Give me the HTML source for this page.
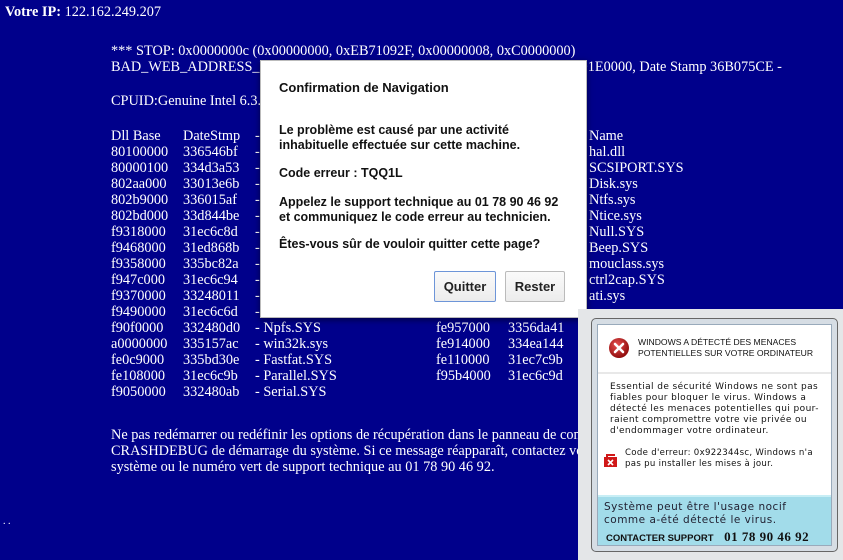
<!DOCTYPE html>
<html><head><meta charset="utf-8"><style>
*{margin:0;padding:0;box-sizing:border-box}
body{width:843px;height:560px;overflow:hidden;background:#00008b;color:#fff;font-family:"Liberation Serif",serif;font-size:14.3px;position:relative}
.ip{position:absolute;left:5px;top:4px;font-size:14.3px}
.t{position:absolute;left:111px;line-height:16px;white-space:pre}
.row{position:absolute;height:16px;line-height:16px;white-space:nowrap}
.c{position:absolute}
.dlg{position:absolute;left:260px;top:60px;width:327px;height:258px;background:#fff;border:1px solid #bbb;box-shadow:0 2px 6px rgba(0,0,0,.5);color:#111;font-family:"Liberation Sans",sans-serif;font-size:12.5px;font-weight:bold}
.dlg p{position:absolute;left:18px;line-height:15px;white-space:nowrap}
.btn{position:absolute;top:210px;height:31px;border:1px solid #bbb;background:linear-gradient(#fafafa,#ececec);text-align:center;line-height:29px;font-size:13px;border-radius:2px;color:#222}
.pop{position:absolute;left:578px;top:309px;width:265px;height:251px;background:#e4e6e8}
.win{position:absolute;left:13px;top:9px;width:247px;height:234px;border:1px solid #666;border-radius:5px;background:#d6dde4;padding:5px}
.inner{position:absolute;left:5px;top:5px;right:5px;bottom:5px;background:#fff;border:1px solid #9ab}
.pop .s{font-family:"DejaVu Sans",sans-serif;font-size:9px;letter-spacing:.4px;color:#111;position:absolute;line-height:11px;white-space:nowrap}
</style></head><body>
<div class="ip"><b>Votre IP:</b> 122.162.249.207</div>
<div class="t" style="top:43px">*** STOP: 0x0000000c (0x00000000, 0xEB71092F, 0x00000008, 0xC0000000)
BAD_WEB_ADDRESS_DETECTED_Windows 7 Address 8D1E4F7A base at 8D1E0000, Date Stamp 36B075CE -</div>
<div class="t" style="top:93px">CPUID:Genuine Intel 6.3.1 irql:1f SYSVER 0xf0000565</div>

<div class="t" style="top:427px">Ne pas redémarrer ou redéfinir les options de récupération dans le panneau de configuration
CRASHDEBUG de démarrage du système. Si ce message réapparaît, contactez votre administrateur
système ou le numéro vert de support technique au 01 78 90 46 92.</div>
<div style="position:absolute;left:3px;top:516px;font-size:10px">. .</div>

<div class="row" style="top:128px;left:111px"><span class="c" style="left:0">Dll Base</span><span class="c" style="left:72px">DateStmp</span><span class="c" style="left:144px">- Name</span><span class="c" style="left:325px">Dll Base</span><span class="c" style="left:397px">DateStmp</span><span class="c" style="left:478px">Name</span></div>
<div class="row" style="top:144px;left:111px"><span class="c">80100000</span><span class="c" style="left:72px">336546bf</span><span class="c" style="left:144px">- ntoskrnl.exe</span><span class="c" style="left:478px">hal.dll</span></div>
<div class="row" style="top:160px;left:111px"><span class="c">80000100</span><span class="c" style="left:72px">334d3a53</span><span class="c" style="left:144px">-</span><span class="c" style="left:478px">SCSIPORT.SYS</span></div>
<div class="row" style="top:176px;left:111px"><span class="c">802aa000</span><span class="c" style="left:72px">33013e6b</span><span class="c" style="left:144px">-</span><span class="c" style="left:478px">Disk.sys</span></div>
<div class="row" style="top:192px;left:111px"><span class="c">802b9000</span><span class="c" style="left:72px">336015af</span><span class="c" style="left:144px">-</span><span class="c" style="left:478px">Ntfs.sys</span></div>
<div class="row" style="top:208px;left:111px"><span class="c">802bd000</span><span class="c" style="left:72px">33d844be</span><span class="c" style="left:144px">-</span><span class="c" style="left:478px">Ntice.sys</span></div>
<div class="row" style="top:224px;left:111px"><span class="c">f9318000</span><span class="c" style="left:72px">31ec6c8d</span><span class="c" style="left:144px">-</span><span class="c" style="left:478px">Null.SYS</span></div>
<div class="row" style="top:240px;left:111px"><span class="c">f9468000</span><span class="c" style="left:72px">31ed868b</span><span class="c" style="left:144px">-</span><span class="c" style="left:478px">Beep.SYS</span></div>
<div class="row" style="top:256px;left:111px"><span class="c">f9358000</span><span class="c" style="left:72px">335bc82a</span><span class="c" style="left:144px">-</span><span class="c" style="left:478px">mouclass.sys</span></div>
<div class="row" style="top:272px;left:111px"><span class="c">f947c000</span><span class="c" style="left:72px">31ec6c94</span><span class="c" style="left:144px">-</span><span class="c" style="left:478px">ctrl2cap.SYS</span></div>
<div class="row" style="top:288px;left:111px"><span class="c">f9370000</span><span class="c" style="left:72px">33248011</span><span class="c" style="left:144px">-</span><span class="c" style="left:478px">ati.sys</span></div>
<div class="row" style="top:304px;left:111px"><span class="c">f9490000</span><span class="c" style="left:72px">31ec6c6d</span><span class="c" style="left:144px">-</span></div>
<div class="row" style="top:320px;left:111px"><span class="c">f90f0000</span><span class="c" style="left:72px">332480d0</span><span class="c" style="left:144px">- Npfs.SYS</span><span class="c" style="left:325px">fe957000</span><span class="c" style="left:397px">3356da41</span></div>
<div class="row" style="top:336px;left:111px"><span class="c">a0000000</span><span class="c" style="left:72px">335157ac</span><span class="c" style="left:144px">- win32k.sys</span><span class="c" style="left:325px">fe914000</span><span class="c" style="left:397px">334ea144</span></div>
<div class="row" style="top:352px;left:111px"><span class="c">fe0c9000</span><span class="c" style="left:72px">335bd30e</span><span class="c" style="left:144px">- Fastfat.SYS</span><span class="c" style="left:325px">fe110000</span><span class="c" style="left:397px">31ec7c9b</span></div>
<div class="row" style="top:368px;left:111px"><span class="c">fe108000</span><span class="c" style="left:72px">31ec6c9b</span><span class="c" style="left:144px">- Parallel.SYS</span><span class="c" style="left:325px">f95b4000</span><span class="c" style="left:397px">31ec6c9d</span></div>
<div class="row" style="top:384px;left:111px"><span class="c">f9050000</span><span class="c" style="left:72px">332480ab</span><span class="c" style="left:144px">- Serial.SYS</span></div>

<div class="dlg">
<p style="top:19px;font-size:13px">Confirmation de Navigation</p>
<p style="top:62px">Le problème est causé par une activité<br>inhabituelle effectuée sur cette machine.</p>
<p style="top:105px">Code erreur : TQQ1L</p>
<p style="top:134px">Appelez le support technique au 01 78 90 46 92<br>et communiquez le code erreur au technicien.</p>
<p style="top:176px">Êtes-vous sûr de vouloir quitter cette page?</p>
<div class="btn" style="left:173px;width:62px;border-color:#6d95d8">Quitter</div>
<div class="btn" style="left:244px;width:60px">Rester</div>
</div>

<div class="pop"><div class="win"><div class="inner">
<svg style="position:absolute;left:10px;top:12px" width="22" height="22"><defs><radialGradient id="g" cx=".4" cy=".35" r=".7"><stop offset="0" stop-color="#e85050"/><stop offset="1" stop-color="#8a0808"/></radialGradient></defs><circle cx="11" cy="11" r="10" fill="url(#g)"/><path d="M7 7L15 15M15 7L7 15" stroke="#fff" stroke-width="2.6" stroke-linecap="round"/></svg>
<div class="s" style="left:40px;top:12px;letter-spacing:0;font-family:'Liberation Sans',sans-serif;font-size:8.6px;line-height:11px">WINDOWS A DÉTECTÉ DES MENACES<br>POTENTIELLES SUR VOTRE ORDINATEUR</div>
<div style="position:absolute;left:0;right:0;top:47px;height:2px;background:#e8e8e8"></div>
<div class="s" style="left:12px;top:57px">Essential de sécurité Windows ne sont pas<br>fiables pour bloquer le virus. Windows a<br>détecté les menaces potentielles qui pour-<br>raient compromettre votre vie privée ou<br>d'endommager votre ordinateur.</div>
<svg style="position:absolute;left:5px;top:127px" width="16" height="16"><rect x="1" y="5" width="13" height="10" fill="#d01818"/><path d="M4 5V3h8" stroke="#d01818" stroke-width="2" fill="none"/><path d="M5 8l5 5M10 8l-5 5" stroke="#fff" stroke-width="1.6"/></svg>
<div class="s" style="left:27px;top:123px;font-size:8.6px;letter-spacing:.3px">Code d'erreur: 0x922344sc, Windows n'a<br>pas pu installer les mises à jour.</div>
<div style="position:absolute;left:0;right:0;bottom:0;height:50px;background:#a2dcea;border-top:2px solid #c8eef5">
<div class="s" style="left:6px;top:4px;font-size:10.5px;line-height:13px;letter-spacing:.5px;color:#223">Système peut être l'usage nocif<br>comme a-été détecté le virus.</div>
<div style="position:absolute;left:8px;top:32px;font-family:'Liberation Sans',sans-serif;font-size:9.5px;font-weight:bold;color:#111;white-space:nowrap">CONTACTER SUPPORT <span style="font-family:'Liberation Serif',serif;font-size:13px;margin-left:8px;letter-spacing:.5px">01 78 90 46 92</span></div>
</div>
</div></div></div>
</body></html>
